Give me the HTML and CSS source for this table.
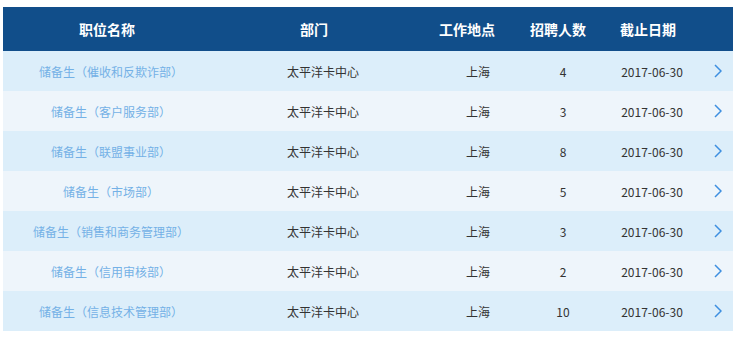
FILE: index.html
```html
<!DOCTYPE html>
<html lang="zh">
<head>
<meta charset="utf-8">
<link rel="stylesheet" href="styles.css">
</head>
<body>
<div class="jobs">
  <div class="head">
    <div class="h1">职位名称</div>
    <div class="h2">部门</div>
    <div class="h3">工作地点</div>
    <div class="h4">招聘人数</div>
    <div class="h5">截止日期</div>
    <div></div>
  </div>
  <div class="row odd"><div class="title">储备生（催收和反欺诈部）</div><div>太平洋卡中心</div><div>上海</div><div>4</div><div>2017-06-30</div><div class="go"><svg width="8" height="14" viewBox="0 0 8 14"><path d="M1 1 L7 7 L1 13" fill="none" stroke="#3d8fe0" stroke-width="1.5"/></svg></div></div>
  <div class="row even"><div class="title">储备生（客户服务部）</div><div>太平洋卡中心</div><div>上海</div><div>3</div><div>2017-06-30</div><div class="go"><svg width="8" height="14" viewBox="0 0 8 14"><path d="M1 1 L7 7 L1 13" fill="none" stroke="#3d8fe0" stroke-width="1.5"/></svg></div></div>
  <div class="row odd"><div class="title">储备生（联盟事业部）</div><div>太平洋卡中心</div><div>上海</div><div>8</div><div>2017-06-30</div><div class="go"><svg width="8" height="14" viewBox="0 0 8 14"><path d="M1 1 L7 7 L1 13" fill="none" stroke="#3d8fe0" stroke-width="1.5"/></svg></div></div>
  <div class="row even"><div class="title">储备生（市场部）</div><div>太平洋卡中心</div><div>上海</div><div>5</div><div>2017-06-30</div><div class="go"><svg width="8" height="14" viewBox="0 0 8 14"><path d="M1 1 L7 7 L1 13" fill="none" stroke="#3d8fe0" stroke-width="1.5"/></svg></div></div>
  <div class="row odd"><div class="title">储备生（销售和商务管理部）</div><div>太平洋卡中心</div><div>上海</div><div>3</div><div>2017-06-30</div><div class="go"><svg width="8" height="14" viewBox="0 0 8 14"><path d="M1 1 L7 7 L1 13" fill="none" stroke="#3d8fe0" stroke-width="1.5"/></svg></div></div>
  <div class="row even"><div class="title">储备生（信用审核部）</div><div>太平洋卡中心</div><div>上海</div><div>2</div><div>2017-06-30</div><div class="go"><svg width="8" height="14" viewBox="0 0 8 14"><path d="M1 1 L7 7 L1 13" fill="none" stroke="#3d8fe0" stroke-width="1.5"/></svg></div></div>
  <div class="row odd"><div class="title">储备生（信息技术管理部）</div><div>太平洋卡中心</div><div>上海</div><div>10</div><div>2017-06-30</div><div class="go"><svg width="8" height="14" viewBox="0 0 8 14"><path d="M1 1 L7 7 L1 13" fill="none" stroke="#3d8fe0" stroke-width="1.5"/></svg></div></div>
</div>
</body>
</html>
```
FILE: styles.css
```css
html, body {
  margin: 0;
  padding: 0;
  background: #ffffff;
}
body {
  padding: 7px 5px 0 3px;
  font-family: "Noto Sans CJK SC", "Noto Sans", sans-serif;
}
.jobs {
  width: 730px;
}
.head {
  display: grid;
  grid-template-columns: 208px 206px 100px 82px 98px 36px;
  height: 44px;
  align-items: center;
  background: #114e8a;
  color: #ffffff;
  font-size: 14px;
  font-weight: bold;
  text-align: center;
}
.row {
  display: grid;
  grid-template-columns: 216px 208px 102px 68px 110px 26px;
  height: 40px;
  align-items: center;
  text-align: center;
  font-size: 12px;
  color: #333333;
}
.odd { background: #dceefa; }
.even { background: #eef5fb; }
.title {
  color: #74b1e6;
}
.go {
  display: flex;
  justify-content: flex-start;
  padding-left: 7px;
  align-items: center;
}
.go svg { display: block; }
```
